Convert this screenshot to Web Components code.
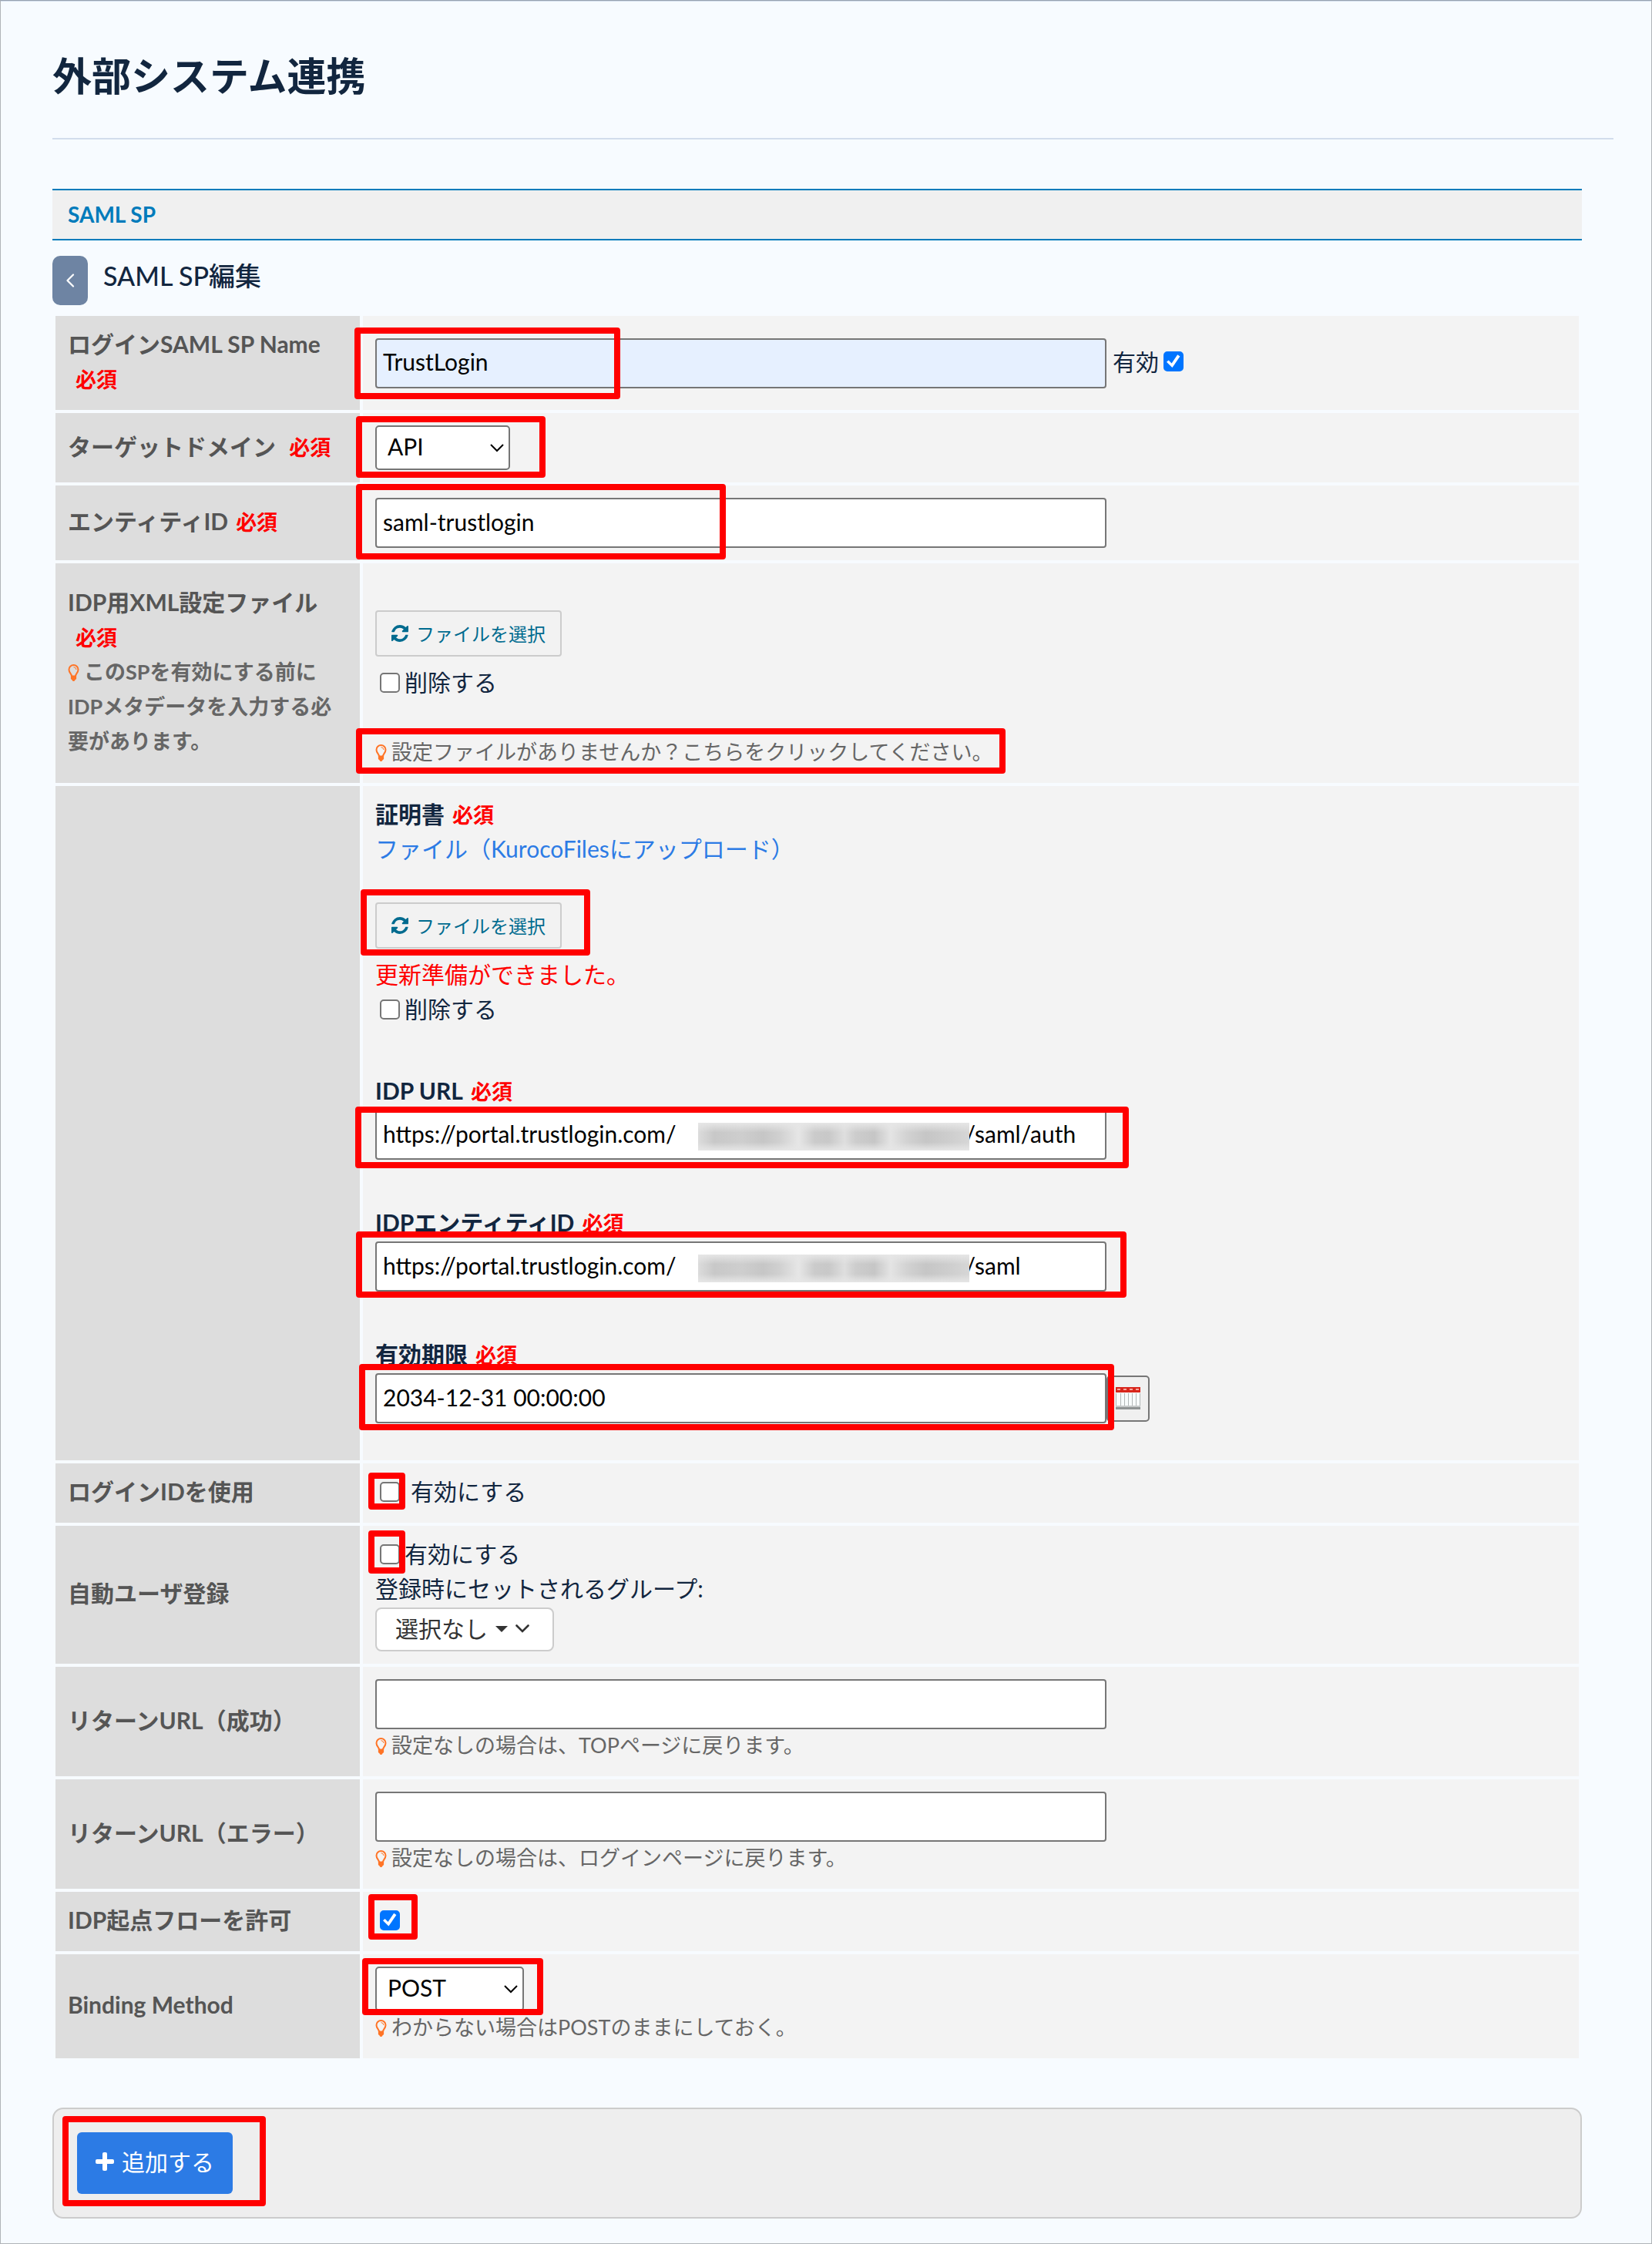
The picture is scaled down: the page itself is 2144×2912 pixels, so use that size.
<!DOCTYPE html>
<html lang="ja">
<head>
<meta charset="utf-8">
<title>外部システム連携</title>
<style>
    body {
        margin: 0;
        background: #f7fbff;
        color: #12263f;
        font-family: Lato, "Noto Sans CJK JP", sans-serif;
        font-size: 30px;
        line-height: 45px;
    }
</style>
</head>
<body>
<admin-page heading="外部システム連携">
    <section-bar label="SAML SP"></section-bar>
    <saml-form></saml-form>
</admin-page>

<script>
/* Small inline icons, drawn in the current text colour */
const ICONS = {
    bulb: `<svg viewBox="0 0 16 22" width="16" height="22"><path d="M5 15.5C5 12.5 1.5 11 1.5 7A6 6 0 0 1 13.5 7C13.5 11 10 12.5 10 15.5" fill="none" stroke="currentColor" stroke-width="2"/><path d="M7.5 3.6Q10.6 3.8 11 7" fill="none" stroke="currentColor" stroke-width="1"/><path d="M3.9 14.5H11.1V19L9.4 20.4Q9 22 7.5 22T5.6 20.4L3.9 19Z" fill="currentColor"/></svg>`,
    refresh: `<svg viewBox="0 0 1536 1536" width="22" height="22"><path fill="currentColor" d="M1511 928q0 5-1 7-64 268-268 434.500t-478 166.500q-146 0-282.500-55t-243.500-157l-129 129q-19 19-45 19t-45-19-19-45v-448q0-26 19-45t45-19h448q26 0 45 19t19 45-19 45l-137 137q71 66 161 102t187 36q134 0 250-65t186-179q11-17 53-117 8-23 30-23h192q13 0 22.500 9.500t9.500 22.500zm25-800v448q0 26-19 45t-45 19h-448q-26 0-45-19t-19-45 19-45l138-138q-148-137-349-137-134 0-250 65t-186 179q-11 17-53 117-8 23-30 23h-199q-13 0-22.500-9.500t-9.500-22.500v-7q65-268 270-434.500t480-166.500q146 0 284 55.500t245 156.500l130-129q19-19 45-19t45 19 19 45z"/></svg>`,
    plus: `<svg viewBox="0 0 24 24" width="24" height="24"><rect x="9" y="0" width="6" height="24" rx="2" fill="currentColor"/><rect x="0" y="9" width="24" height="6" rx="2" fill="currentColor"/></svg>`,
    back: `<svg viewBox="0 0 12 18" width="12" height="18"><path d="M10 1.500L2.500 9L10 16.500" fill="none" stroke="currentColor" stroke-width="2.200" stroke-linecap="round" stroke-linejoin="round"/></svg>`,
    caret: `<svg viewBox="0 0 16 8" width="16" height="8"><path d="M0 0H16L8 8Z" fill="currentColor"/></svg>`,
    chevron: `<svg viewBox="0 0 18 11" width="18" height="11"><path d="M1.500 1.500L9 9L16.500 1.500" fill="none" stroke="currentColor" stroke-width="2.600" stroke-linecap="round"/></svg>`,
    calendar: `<svg viewBox="0 0 32 30" width="32" height="30"><rect x="0" y="2" width="32" height="26" fill="#f8fcfc"/><g fill="none" stroke="#b2b8b8"><path d="M.5 8V27M6.500 8V27M11.500 8V27M16.500 8V27M21.500 8V27M26.500 8V27M31.500 8V27"/></g><rect x="0" y="0" width="32" height="7" fill="#d8261c"/><path d="M2 3H30" stroke="#f6a59c" stroke-width="2" stroke-dasharray="4 4"/><rect x="0" y="24" width="32" height="2" fill="#c6caca"/><rect x="0" y="26" width="32" height="3" fill="#8f9494"/></svg>`
};

class UiIcon extends HTMLElement {
    constructor() {
        super();
        this.attachShadow({ mode: "open" });
    }

    connectedCallback() {
        this.shadowRoot.innerHTML = `
            <style>
                :host { display: inline-block; line-height: 0; flex: none; }
                svg { display: block; }
            </style>
            ${ICONS[this.getAttribute("name")]}
        `;
    }
}
customElements.define("ui-icon", UiIcon);

/* Red callout frame, floats over the nearest positioned block */
class MarkFrame extends HTMLElement {
    constructor() {
        super();
        this.attachShadow({ mode: "open" });
    }

    connectedCallback() {
        const [left, top, width, height] = this.getAttribute("box").split(" ");
        this.shadowRoot.innerHTML = `
            <style>
                :host {
                    position: absolute;
                    left: ${left}px;
                    top: ${top}px;
                    width: ${width}px;
                    height: ${height}px;
                    box-sizing: border-box;
                    border: 8px solid #f00;
                    border-radius: 4px;
                    pointer-events: none;
                    z-index: 2;
                }
            </style>
        `;
    }
}
customElements.define("mark-frame", MarkFrame);

class AdminPage extends HTMLElement {
    constructor() {
        super();
        this.attachShadow({ mode: "open" });
    }

    connectedCallback() {
        this.shadowRoot.innerHTML = `
            <style>
                :host {
                    display: block;
                    box-sizing: border-box;
                    min-height: 100vh;
                    padding: 60px 49px 32px 67px;
                    border: 1px solid #b0b4b8;
                    border-top-color: #97a1b0;
                    box-shadow: inset 0 1px #d2ddec;
                }
                h1 {
                    margin: 0;
                    padding-bottom: 42px;
                    border-bottom: 2px solid #d2ddec;
                    font-size: 51px;
                    line-height: 76px;
                }
                main { padding: 64px 41px 0 0; }
            </style>
            <h1>${this.getAttribute("heading")}</h1>
            <main><slot></slot></main>
        `;
    }
}
customElements.define("admin-page", AdminPage);

class SectionBar extends HTMLElement {
    constructor() {
        super();
        this.attachShadow({ mode: "open" });
    }

    connectedCallback() {
        this.shadowRoot.innerHTML = `
            <style>
                :host { display: block; }
                h2 {
                    margin: 0;
                    padding: 9px 20px;
                    border: solid #007bbb;
                    border-width: 2px 0;
                    background: #f0f0f0;
                    color: #007bbb;
                    font-size: 28px;
                    font-weight: 700;
                    line-height: 45px;
                }
            </style>
            <h2>${this.getAttribute("label")}</h2>
        `;
    }
}
customElements.define("section-bar", SectionBar);

/* One line of the form: slot "head" on the left, the fields on the right */
class FormRow extends HTMLElement {
    constructor() {
        super();
        this.attachShadow({ mode: "open" });
        this.shadowRoot.innerHTML = `
            <style>
                :host {
                    display: grid;
                    grid-template-columns: 395px 1fr;
                    gap: 4px;
                }
                .head, .cell {
                    display: flex;
                    flex-direction: column;
                    justify-content: center;
                    padding: 16px;
                }
                .head {
                    padding: 14px 16px 18px;
                    background: #ddd;
                    color: #555;
                    font-weight: 700;
                }
                .cell { position: relative; background: #f3f3f3; }
            </style>
            <div class="head"><slot name="head"></slot></div>
            <div class="cell"><slot></slot></div>
        `;
    }
}
customElements.define("form-row", FormRow);

class SamlForm extends HTMLElement {
    constructor() {
        super();
        this.attachShadow({ mode: "open" });
    }

    connectedCallback() {
        this.render();
    }

    bulb(text) {
        return `<ui-icon class="bulb" name="bulb"></ui-icon>${text}`;
    }

    check(id, text) {
        return `<div class="check"><input type="checkbox" id="${id}"><label for="${id}">${text}</label></div>`;
    }

    fileButton() {
        return `<button type="button" class="file"><ui-icon name="refresh"></ui-icon>ファイルを選択</button>`;
    }

    render() {
        const must = `<span class="must">必須</span>`;
        /* the tenant part of the address stays blank under the mask */
        const gap = "\u2003".repeat(16) + "\u2002";

        this.shadowRoot.innerHTML = `
            <style>
                :host { display: block; }
                * { box-sizing: border-box; }
                input, select, button { margin: 0; font: inherit; }
                a { color: #2c7be5; text-decoration: none; }
                .title {
                    display: flex;
                    align-items: flex-start;
                    gap: 20px;
                    padding: 20px 0 10px;
                }
                h3 {
                    margin: 0;
                    font-size: 34px;
                    font-weight: 500;
                    line-height: 52px;
                }
                .back {
                    display: flex;
                    align-items: center;
                    justify-content: center;
                    width: 46px;
                    height: 64px;
                    border: 0;
                    border-radius: 10px;
                    background: #6e84a3;
                    color: #fff;
                }
                .rows {
                    display: grid;
                    gap: 4px;
                    padding: 4px;
                }
                .text {
                    display: block;
                    width: 949px;
                    max-width: 100%;
                    height: 65px;
                    padding: 0 8px 4px;
                    border: 2px solid #767676;
                    border-radius: 4px;
                    background: #fff;
                    color: #000;
                }
                .filled { background: #e6f0ff; }
                .line { display: flex; align-items: center; }
                .name { gap: 8px; }
                select {
                    display: block;
                    width: 175px;
                    height: 58px;
                    padding: 0 14px 4px;
                    border: 2px solid #767676;
                    border-radius: 5px;
                    appearance: none;
                    color: #000;
                    background: #fff url("data:image/svg+xml,%3Csvg xmlns='http://www.w3.org/2000/svg' width='18' height='11'%3E%3Cpath d='M1 1L9 9L17 1' fill='none' stroke='black' stroke-width='2'/%3E%3C/svg%3E") no-repeat right 6px center;
                }
                select.wide { width: 193px; }
                input[type=checkbox] {
                    flex: none;
                    display: grid;
                    place-items: center;
                    appearance: none;
                    width: 26px;
                    height: 26px;
                    border: 2px solid #767676;
                    border-radius: 5px;
                    background: #fff;
                }
                input[type=checkbox]:checked { border-color: #0075ff; background: #0075ff; }
                input[type=checkbox]:checked::before {
                    content: "";
                    width: 20px;
                    height: 20px;
                    background: #fff;
                    clip-path: polygon(5% 54%, 18% 42%, 38% 62%, 76% 6%, 92% 18%, 42% 90%);
                }
                .row-text, .field > label {
                    display: block;
                    padding-bottom: 4px;
                    line-height: 41px;
                }
                .check {
                    display: flex;
                    align-items: center;
                    gap: 6px;
                    height: 45px;
                    padding: 0 0 4px 6px;
                    line-height: 41px;
                }
                .check.wide { gap: 14px; }
                .check.after { padding-left: 0; }
                .must {
                    margin-left: 10px;
                    color: #f00;
                    font-size: 27px;
                    font-weight: 700;
                    line-height: 1;
                }
                .hint { color: #666; font-size: 27px; }
                .bulb { margin-right: 5px; color: #ff7426; vertical-align: -2px; }
                .file {
                    display: flex;
                    align-items: center;
                    justify-content: center;
                    gap: 10px;
                    width: 242px;
                    height: 60px;
                    margin: 45px 0 13px;
                    border: 2px solid #ccc;
                    border-radius: 4px;
                    background: #f2f2f2;
                    color: #006b8f;
                    font-size: 24px;
                }
                .spaced { margin-top: 45px; }
                .ready { color: #f00; }
                .field { margin-top: 61px; }
                .field.last { margin-bottom: 32px; }
                .field > label, .cert { font-weight: 700; }
                .masked { position: relative; }
                .mask {
                    position: absolute;
                    left: 419px;
                    top: 17px;
                    width: 352px;
                    height: 36px;
                    background:
                        linear-gradient(#e6e6e6, #e6e6e600 35% 70%, #e6e6e6),
                        linear-gradient(90deg, #dcdcdc, #c8c8c8 6%, #cecece 16%, #c6c6c6 24%, #d0d0d0 30%, #e6e6e6 37%, #cbcbcb 43%, #c8c8c8 48%, #dedede 54%, #cdcdcd 58%, #c6c6c6 65%, #e4e4e4 71%, #d2d2d2 77%, #c6c6c6 84%, #cccccc 91%, #d6d6d6);
                }
                .calendar {
                    display: grid;
                    place-items: center;
                    width: 56px;
                    height: 60px;
                    padding: 0;
                    border: 2px solid #767676;
                    border-radius: 5px;
                    background: #f0f0f0;
                }
                .group {
                    display: flex;
                    align-items: center;
                    gap: 10px;
                    width: 232px;
                    height: 57px;
                    padding: 0 24px 2px;
                    border: 2px solid #ccc;
                    border-radius: 8px;
                    background: #fff;
                    color: #333;
                    white-space: nowrap;
                }
                .actions {
                    position: relative;
                    margin-top: 60px;
                    padding: 30px;
                    border: 2px solid #ccc;
                    border-radius: 14px;
                    background: #eee;
                }
                .add {
                    display: flex;
                    align-items: center;
                    gap: 10px;
                    height: 80px;
                    padding: 0 24px 4px;
                    border: 0;
                    border-radius: 6px;
                    background: #2c7be5;
                    color: #fff;
                    white-space: nowrap;
                }
            </style>

            <div class="title">
                <button type="button" class="back" aria-label="戻る"><ui-icon name="back"></ui-icon></button>
                <h3>SAML SP編集</h3>
            </div>

            <div class="rows">
                <form-row>
                    <label slot="head" for="name">ログインSAML SP Name<br>${must}</label>
                    <div class="line name">
                        <input class="text filled" id="name" value="TrustLogin">
                        <div class="check after"><label for="active">有効</label><input type="checkbox" id="active" checked></div>
                    </div>
                    <mark-frame box="-11 15 345 93"></mark-frame>
                </form-row>

                <form-row>
                    <label slot="head" for="domain">ターゲットドメイン ${must}</label>
                    <select id="domain"><option>API</option></select>
                    <mark-frame box="-9 4 246 80"></mark-frame>
                </form-row>

                <form-row>
                    <label slot="head" for="entity">エンティティID${must}</label>
                    <input class="text" id="entity" value="saml-trustlogin">
                    <mark-frame box="-9 -2 480 98"></mark-frame>
                </form-row>

                <form-row>
                    <div slot="head">
                        IDP用XML設定ファイル<br>${must}
                        <div class="hint">${this.bulb("このSPを有効にする前にIDPメタデータを入力する必要があります。")}</div>
                    </div>
                    ${this.fileButton()}
                    ${this.check("deleteXml", "削除する")}
                    <div class="row-text hint spaced">${this.bulb("設定ファイルがありませんか？こちらをクリックしてください。")}</div>
                    <mark-frame box="-9 214 843 59"></mark-frame>
                </form-row>

                <form-row>
                    <div class="row-text cert">証明書${must}</div>
                    <a class="row-text" href="#files">ファイル（KurocoFilesにアップロード）</a>
                    ${this.fileButton()}
                    <div class="row-text ready">更新準備ができました。</div>
                    ${this.check("deleteCert", "削除する")}
                    <div class="field">
                        <label for="idpUrl">IDP URL${must}</label>
                        <div class="masked">
                            <input class="text" id="idpUrl" value="https://portal.trustlogin.com/${gap}/saml/auth">
                            <span class="mask"></span>
                        </div>
                    </div>
                    <div class="field">
                        <label for="idpEntity">IDPエンティティID${must}</label>
                        <div class="masked">
                            <input class="text" id="idpEntity" value="https://portal.trustlogin.com/${gap}/saml">
                            <span class="mask"></span>
                        </div>
                    </div>
                    <div class="field last">
                        <label for="expires">有効期限${must}</label>
                        <div class="line">
                            <input class="text" id="expires" value="2034-12-31 00:00:00">
                            <button type="button" class="calendar" aria-label="日付を選択"><ui-icon name="calendar"></ui-icon></button>
                        </div>
                    </div>
                    <mark-frame box="-3 134 298 86"></mark-frame>
                    <mark-frame box="-10 416 1004 80"></mark-frame>
                    <mark-frame box="-9 578 1000 86"></mark-frame>
                    <mark-frame box="-5 750 980 86"></mark-frame>
                </form-row>

                <form-row>
                    <div slot="head">ログインIDを使用</div>
                    <div class="check wide"><input type="checkbox" id="useId"><label for="useId">有効にする</label></div>
                    <mark-frame box="7 12 48 48"></mark-frame>
                </form-row>

                <form-row>
                    <div slot="head">自動ユーザ登録</div>
                    ${this.check("autoUser", "有効にする")}
                    <div class="row-text">登録時にセットされるグループ:</div>
                    <button type="button" class="group">選択なし<ui-icon name="caret"></ui-icon><ui-icon name="chevron"></ui-icon></button>
                    <mark-frame box="7 6 48 56"></mark-frame>
                </form-row>

                <form-row>
                    <label slot="head" for="returnOk">リターンURL（成功）</label>
                    <input class="text" id="returnOk">
                    <div class="row-text hint">${this.bulb("設定なしの場合は、TOPページに戻ります。")}</div>
                </form-row>

                <form-row>
                    <label slot="head" for="returnError">リターンURL（エラー）</label>
                    <input class="text" id="returnError">
                    <div class="row-text hint">${this.bulb("設定なしの場合は、ログインページに戻ります。")}</div>
                </form-row>

                <form-row>
                    <label slot="head" for="idpFlow">IDP起点フローを許可</label>
                    <div class="check"><input type="checkbox" id="idpFlow" checked></div>
                    <mark-frame box="7 3 64 59"></mark-frame>
                </form-row>

                <form-row>
                    <label slot="head" for="binding">Binding Method</label>
                    <select class="wide" id="binding"><option>POST</option></select>
                    <div class="row-text hint">${this.bulb("わからない場合はPOSTのままにしておく。")}</div>
                    <mark-frame box="-1 5 235 74"></mark-frame>
                </form-row>
            </div>

            <div class="actions">
                <button type="button" class="add"><ui-icon name="plus"></ui-icon>追加する</button>
                <mark-frame box="11 9 264 117"></mark-frame>
            </div>
        `;
    }
}
customElements.define("saml-form", SamlForm);
</script>
</body>
</html>
